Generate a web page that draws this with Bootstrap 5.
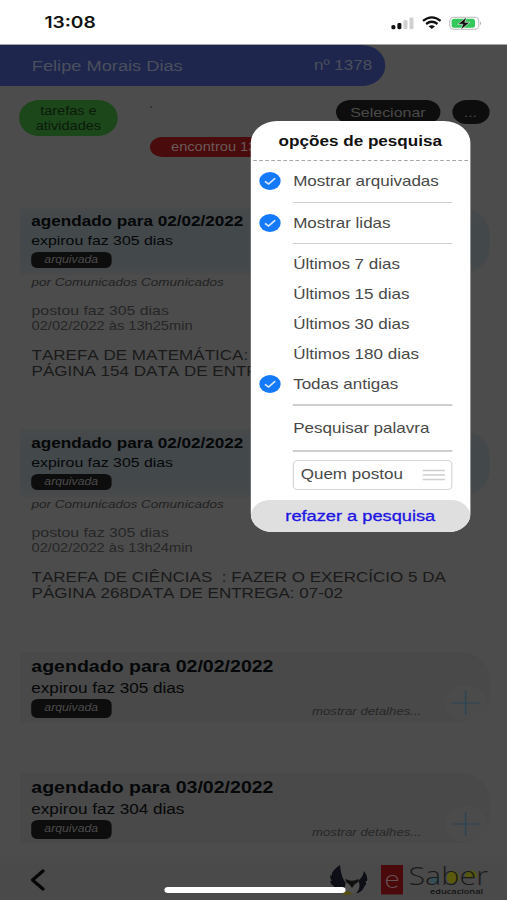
<!DOCTYPE html>
<html lang="pt-BR">
<head>
<meta charset="utf-8">
<meta name="viewport" content="width=device-width, initial-scale=1">
<title>eSaber - tarefas e atividades</title>
<link href="https://cdn.jsdelivr.net/npm/bootstrap@5.3.0/dist/css/bootstrap.min.css" rel="stylesheet">
<style>
html,body{margin:0;width:507px;height:900px;overflow:hidden;background:#4c4c4c}
body{font-family:"Liberation Sans",Arial,sans-serif;color:#000}
/* wide-aspect phone view: everything is laid out at 422.5px and stretched */
.phone{width:422.5px;height:900px;transform:scaleX(1.2);transform-origin:0 0;background:#4c4c4c;overflow:hidden}
.status{height:45px;background:#fff;padding:0 21px 0 37px;border-bottom:1px solid #a5a5a5}
.clock{font:600 16px/48px Inter,sans-serif;color:#111}
.userbar{width:321px;height:41px;background:#1e264d;border-radius:0 20px 20px 0;color:#4b4f5c;font-size:15.2px;padding:1px 10.8px 0 26.5px}
.userbar .num{font-size:14.2px}
.tools{height:121px;padding:14px 15px 0 16px}
.tag-green{width:82px;height:36px;border-radius:17px;background:#1c471a;color:#0b1a0a;font-size:12.1px;line-height:14.3px;padding-top:1px}
.pill{height:24px;border-radius:12px;background:#0d0d0d;color:#4a4a4a;font-size:13.3px;padding-top:1px}
.found{width:200px;height:20px;border-radius:10px;background:#490b0b;color:#6b5a5a;font-size:12.2px;line-height:21px;padding-left:17.5px;margin-left:109px;margin-top:1px}
.task{margin:0 15px 0 16.5px}
.head{background:linear-gradient(#484a4b,#43484b 30%,#43484b 75%,#484a4b);border-radius:0 26px 26px 0;height:68px;padding:3px 0 0 9.6px;color:#050708}
.t1{font-size:14.25px;line-height:22px;font-weight:700}
.t2{font-size:13.2px;line-height:18px}
.arq{width:66.5px;height:16px;border-radius:5.5px;background:#0d0d0d;color:#4c4c4c;font-size:10.2px;font-style:italic;line-height:16px;margin-top:2px}
.info{padding-left:9.8px;color:#1a1a1a}
.by{font-size:11.25px;line-height:15px;font-style:italic;color:#222}
.ago{font-size:13.2px;line-height:16px;margin-top:13px;color:#262626}
.when{font-size:12.2px;line-height:14px;color:#262626;height:13px}
.txt{font-size:14.2px;line-height:16px;margin-top:15px;white-space:pre;font-kerning:none}
.grayhead{height:70px;background:#494949;padding-top:3px}
.grayhead .t1{font-size:16.3px}
.grayhead .t2{font-size:14.25px;margin-top:2px}
.grayhead .arq{height:18.5px;line-height:18.5px;margin-top:2px}
.more{font-size:11px;font-style:italic;color:#272727;line-height:16px;margin:0 17.4px 3px auto}
.plus{width:38px;height:38px;margin-right:1px;margin-bottom:0}
.g50{margin-bottom:50px}.g51{margin-bottom:51px}
.foot{height:43px;top:857px;background:#4a4a4a}
.homebar{left:136.5px;top:887px;width:151px;height:5.5px;border-radius:3px;background:#fff}
.panel{left:208.5px;top:121px;width:183.5px;height:410.5px;border-radius:22px 22px 18px 18px;background:#fff;color:#494949;font-size:14.2px;overflow:hidden}
.ptitle{height:40px;line-height:40px;font-size:14.25px;color:#111;border-bottom:1px dashed #a5a5a5;margin:0 2px}
.opts{padding:0 15px 0 7.2px}
.opt{height:30px;line-height:30px}
.opt .ck{width:18px;height:18px;margin-right:10.6px;flex:none}
.rule{height:1.5px;background:#cfcfcf;margin-left:28.6px}
.who{height:30px;margin:8.5px 0 0 28.6px;border:1px solid #d6d6d6;border-radius:4px;padding:0 4.8px 0 5.3px}
.redo{height:32px;border-radius:19px;background:#dfdfdf;color:#2015e2;font-size:15.2px;line-height:32px;margin-top:9.5px;-webkit-text-stroke:.3px #2015e2}
</style>
</head>
<body>
<div class="phone position-relative">
  <header class="status d-flex justify-content-between align-items-center">
    <span class="clock">13:08</span>
    <svg width="78" height="20" viewBox="0 0 93.6 20" preserveAspectRatio="none">
      <g fill="#111"><rect x="2.6" y="13" width="4" height="4.2" rx="1.5"/><rect x="8.6" y="11" width="4" height="6.2" rx="1.4"/></g>
      <g fill="#cfcfcf"><rect x="14.7" y="8" width="4" height="9.2" rx="1.4"/><rect x="20.7" y="5.5" width="4" height="11.7" rx="1.4"/></g>
      <g fill="none" stroke="#111" stroke-width="2.3"><path d="M34.2 8.9Q43 1.9 51.8 8.9M37.3 12Q43 7.6 48.7 12"/></g>
      <path d="M39.8 14.3Q43 12 46.2 14.3L43 17Z" fill="#111"/>
      <rect x="61" y="5.3" width="29" height="12" rx="4" fill="#fff" stroke="#b8b8b8"/>
      <rect x="62.8" y="6.8" width="23.4" height="9" rx="2.5" fill="#34c759"/>
      <path d="M91.3 9.3Q93.5 11.3 91.3 13.3Z" fill="#b0b0b0"/>
      <path d="M78 4.8L69 12.3H74L72 17.9L81 10.3H76Z" fill="#111" stroke="#fff" stroke-width=".6"/>
    </svg>
  </header>
  <div class="userbar d-flex justify-content-between align-items-center"><span>Felipe Morais Dias</span><span class="num">nº 1378</span></div>

  <section class="tools">
    <div class="d-flex align-items-start">
      <div class="tag-green text-center d-flex align-items-center justify-content-center">tarefas e<br>atividades</div>
      <svg class="ms-4" width="8" height="12"><circle cx="4" cy="7" r=".8" fill="#222"/></svg>
      <div class="pill ms-auto d-flex align-items-center justify-content-center" style="width:86.5px">Selecionar</div>
      <div class="pill d-flex align-items-center justify-content-center" style="width:31px;margin-left:10px">...</div>
    </div>
    <div class="found">encontrou 1398</div>
  </section>

  <article class="task g50">
    <div class="head"><div class="t1">agendado para 02/02/2022</div><div class="t2">expirou faz 305 dias</div><div class="arq text-center">arquivada</div></div>
    <div class="info"><div class="by">por Comunicados Comunicados</div><div class="ago">postou faz 305 dias</div><div class="when">02/02/2022 às 13h25min</div><div class="txt">TAREFA DE MATEMÁTICA: FAZER
PÁGINA 154 DATA DE ENTREGA</div></div>
  </article>
  <article class="task g51">
    <div class="head"><div class="t1">agendado para 02/02/2022</div><div class="t2">expirou faz 305 dias</div><div class="arq text-center">arquivada</div></div>
    <div class="info"><div class="by">por Comunicados Comunicados</div><div class="ago">postou faz 305 dias</div><div class="when">02/02/2022 às 13h24min</div><div class="txt">TAREFA DE CIÊNCIAS  : FAZER O EXERCÍCIO 5 DA
PÁGINA 268DATA DE ENTREGA: 07-02</div></div>
  </article>
  <article class="task g51">
    <div class="head grayhead d-flex align-items-end">
      <div class="align-self-start"><div class="t1">agendado para 02/02/2022</div><div class="t2">expirou faz 305 dias</div><div class="arq text-center">arquivada</div></div>
      <div class="more">mostrar detalhes...</div>
      <svg class="plus" viewBox="0 0 38 38"><circle cx="19" cy="19" r="18" fill="#4b4b4b"/><path d="M7.5 19h23M19 7v24" stroke="#2a4553" stroke-width="1.2"/></svg>
    </div>
  </article>
  <article class="task">
    <div class="head grayhead d-flex align-items-end">
      <div class="align-self-start"><div class="t1">agendado para 03/02/2022</div><div class="t2">expirou faz 304 dias</div><div class="arq text-center">arquivada</div></div>
      <div class="more">mostrar detalhes...</div>
      <svg class="plus" viewBox="0 0 38 38"><circle cx="19" cy="19" r="18" fill="#4b4b4b"/><path d="M7.5 19h23M19 7v24" stroke="#2a4553" stroke-width="1.2"/></svg>
    </div>
  </article>

  <footer class="foot position-absolute start-0 w-100">
    <svg width="422.5" height="43" viewBox="0 0 507 43" preserveAspectRatio="none">
      <path d="M43 14L32.5 23L43 32" fill="none" stroke="#050505" stroke-width="3.2" stroke-linecap="round" stroke-linejoin="round"/>
      <!-- owl -->
      <g fill="#0d0e16">
        <path d="M340 8C334 12 331 16 332 19L330 18Q330 22 332 24L330 24Q331 28 334 29L333 31Q337 36 344 35L347 27Q341 22 340 8Z"/>
        <path d="M364 14Q368 19 367 24L365.5 24Q367 28 364.5 29Q363 34 358 36L356 36Q360 30 358 24Q363 20 364 14Z"/>
      </g>
      <path d="M346 24Q352 20 359 25Q361 32 356 36Q349 38 344 35Z" fill="#505050"/>
      <path d="M345.5 22Q352 25.5 358.5 22Q358.5 26 355 27L352 31L349 27Q345.5 26 345.5 22Z" fill="#101010"/>
      <path d="M342 36L348 34L353 37L344 38Z" fill="#55500c"/>
      <rect x="381" y="8" width="22" height="29.5" fill="#4a0a0c"/>
      <text x="384.5" y="31" font-family="Lato,sans-serif" font-weight="300" font-size="26" textLength="15" lengthAdjust="spacingAndGlyphs" fill="#665252">e</text>
      <ellipse cx="435" cy="23.3" rx="4.5" ry="3.8" fill="#34515a"/>
      <ellipse cx="453" cy="20.5" rx="6" ry="6.5" fill="#5a5b0c"/>
      <path d="M465 20Q465 13.5 471 13.5Q477 13.5 477 20Z" fill="#55580e"/>
      <text x="408.5" y="27.5" font-family="'Open Sans',Lato,sans-serif" font-weight="300" font-size="26.5" textLength="79.5" lengthAdjust="spacingAndGlyphs" fill="#1b1b1b">Saber</text>
      <text x="430" y="37" font-family="'Open Sans',sans-serif" font-weight="600" font-size="7.5" textLength="53" lengthAdjust="spacingAndGlyphs" fill="#121212">educacional</text>
    </svg>
  </footer>

  <div class="panel position-absolute">
    <div class="ptitle text-center fw-bold">opções de pesquisa</div>
    <div class="opts">
      <div class="opt d-flex align-items-center" style="height:40.5px"><svg class="ck" viewBox="0 0 18 18"><circle cx="9" cy="9" r="9" fill="#1479fb"/><path d="M4.8 9.4L7.8 12L13.3 6.2" fill="none" stroke="#d8e9ff" stroke-width="1.5"/></svg>Mostrar arquivadas</div>
      <div class="rule"></div>
      <div class="opt d-flex align-items-center" style="height:39.5px"><svg class="ck" viewBox="0 0 18 18"><circle cx="9" cy="9" r="9" fill="#1479fb"/><path d="M4.8 9.4L7.8 12L13.3 6.2" fill="none" stroke="#d8e9ff" stroke-width="1.5"/></svg>Mostrar lidas</div>
      <div class="rule"></div>
      <div class="opt d-flex align-items-center" style="margin-top:5px"><span class="ck"></span>Últimos 7 dias</div>
      <div class="opt d-flex align-items-center"><span class="ck"></span>Últimos 15 dias</div>
      <div class="opt d-flex align-items-center"><span class="ck"></span>Últimos 30 dias</div>
      <div class="opt d-flex align-items-center"><span class="ck"></span>Últimos 180 dias</div>
      <div class="opt d-flex align-items-center"><svg class="ck" viewBox="0 0 18 18"><circle cx="9" cy="9" r="9" fill="#1479fb"/><path d="M4.8 9.4L7.8 12L13.3 6.2" fill="none" stroke="#d8e9ff" stroke-width="1.5"/></svg>Todas antigas</div>
      <div class="rule" style="margin-top:5px"></div>
      <div class="opt d-flex align-items-center" style="height:44.5px"><span class="ck"></span>Pesquisar palavra</div>
      <div class="rule"></div>
      <div class="who d-flex align-items-center justify-content-between">Quem postou
        <svg width="19" height="12" viewBox="0 0 19 12"><path d="M0 1.5h19M0 6h19M0 10.5h19" stroke="#cfcfcf" stroke-width="1.3"/></svg>
      </div>
    </div>
    <div class="redo text-center">refazer a pesquisa</div>
  </div>
  <div class="homebar position-absolute"></div>
</div>
<script src="https://cdn.jsdelivr.net/npm/bootstrap@5.3.0/dist/js/bootstrap.bundle.min.js"></script>
</body>
</html>
